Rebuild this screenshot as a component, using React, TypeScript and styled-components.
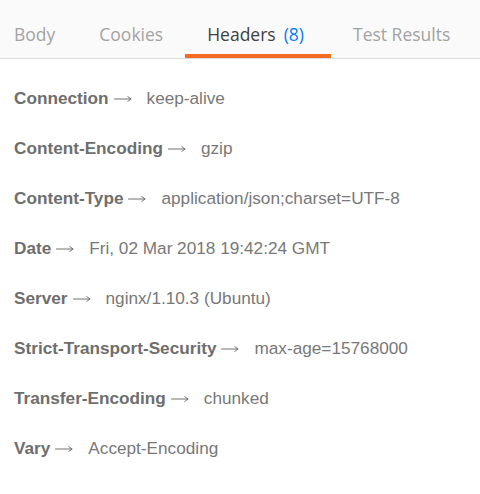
import React from "react";
import styled, { createGlobalStyle } from "styled-components";

const Global = createGlobalStyle`
  html, body { margin: 0; padding: 0; background: #ffffff; }
  body { width: 480px; height: 494px; overflow: hidden; }
`;

const Page = styled.div`
  width: 480px;
  height: 494px;
  background: #ffffff;
  display: flex;
  flex-direction: column;
`;

const TabBar = styled.div`
  display: flex;
  align-items: stretch;
  height: 58px;
  background: #fafafa;
  border-bottom: 1px solid #dcdcdc;
`;

const Tab = styled.div<{ $active?: boolean }>`
  display: flex;
  align-items: center;
  padding: 10px 22px 0;
  font-family: "Open Sans", "Noto Sans", sans-serif;
  font-size: 17.5px;
  color: ${(p) => (p.$active ? "#404040" : "#a3a3a3")};
  box-shadow: ${(p) => (p.$active ? "inset 0 -4px 0 #f26b21" : "none")};
  white-space: nowrap;
  &:first-child { padding-left: 14px; }
`;

const Count = styled.span`
  color: #097bed;
  margin-left: 8px;
  margin-right: 5px;
`;

const List = styled.div`
  display: flex;
  flex-direction: column;
  padding: 14px 14px 0;
`;

const Row = styled.div`
  height: 50px;
  display: flex;
  align-items: center;
  font-family: "Liberation Sans", Arial, sans-serif;
  font-size: 17.2px;
  color: #757575;
  white-space: nowrap;
`;

const Key = styled.span`
  font-weight: bold;
  color: #6e6e6e;
`;

const ArrowIcon = styled.svg`
  margin-left: 5px;
  margin-top: 2px;
  flex: none;
`;

const Value = styled.span`
  margin-left: 15px;
  color: #787878;
`;

const Arrow = () => (
  <ArrowIcon width="18" height="10" viewBox="0 0 18 10" aria-hidden="true">
    <path
      d="M0.5 5 H17 M13.8 2.6 L17 5 L13.8 7.4"
      fill="none"
      stroke="#707070"
      strokeWidth="1"
      strokeLinecap="round"
      strokeLinejoin="round"
    />
  </ArrowIcon>
);

const headers: [string, string][] = [
  ["Connection", "keep-alive"],
  ["Content-Encoding", "gzip"],
  ["Content-Type", "application/json;charset=UTF-8"],
  ["Date", "Fri, 02 Mar 2018 19:42:24 GMT"],
  ["Server", "nginx/1.10.3 (Ubuntu)"],
  ["Strict-Transport-Security", "max-age=15768000"],
  ["Transfer-Encoding", "chunked"],
  ["Vary", "Accept-Encoding"],
];

export default function App() {
  return (
    <Page>
      <Global />
      <TabBar>
        <Tab>Body</Tab>
        <Tab>Cookies</Tab>
        <Tab $active>
          Headers<Count>(8)</Count>
        </Tab>
        <Tab>Test Results</Tab>
      </TabBar>
      <List>
        {headers.map(([k, v]) => (
          <Row key={k}>
            <Key>{k}</Key>
            <Arrow />
            <Value>{v}</Value>
          </Row>
        ))}
      </List>
    </Page>
  );
}
